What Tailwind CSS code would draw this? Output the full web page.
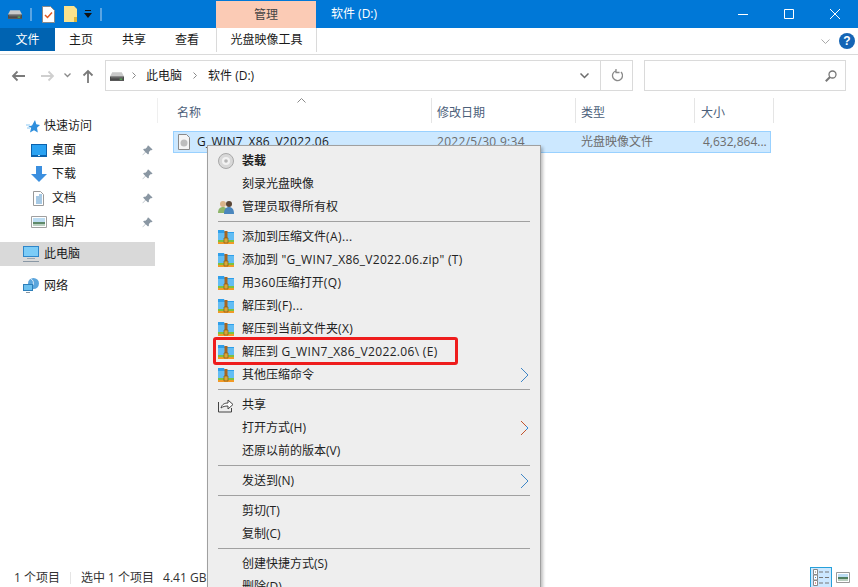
<!DOCTYPE html>
<html>
  <head>
    <meta charset="utf-8" />
    <title>软件 (D:)</title>
    <script src="https://cdn.jsdelivr.net/npm/@tailwindcss/browser@4"></script>
  </head>
  <body class="relative w-[858px] h-[587px] overflow-hidden flex flex-col bg-white text-[12px] text-[#1a1a1a] font-['Open_Sans','Noto_Sans_CJK_SC',sans-serif]">
    <!-- shared icons -->
    <svg class="hidden">
      <symbol id="zip" viewBox="0 0 16 16">
        <path d="M0 1h6l1 2h9v9H0z" fill="#2f9fea" />
        <path d="M0 4h16v7H0z" fill="#62bdf3" />
        <path d="M0 11h16v2H0z" fill="#7cc23f" />
        <path d="M0 13h16v2H0z" fill="#f29a26" />
        <path d="M6.500 2h3v9h-3z" fill="#a8651f" />
        <path d="M6 9h4v5H6z" fill="#d9a638" stroke="#8a5a14" stroke-width=".7" />
      </symbol>
      <symbol id="drive" viewBox="0 0 16 10">
        <path d="M2.500 0h11L16 5v5H0V5z" fill="#c9c9c9" />
        <path d="M0 5h16v5H0z" fill="#4a4a4a" />
        <path d="M1 6h14v1H1z" fill="#7a7a7a" />
        <path d="M11 7.500h3v1h-3z" fill="#5fdc5f" />
      </symbol>
      <symbol id="pin" viewBox="0 0 12 12">
        <path d="M7 .5l4.500 4.500-1 .8-.8-.3-2.200 2.200.1 1.600-1 1L4 7.900.8 11.200.5 10.900 3.600 7.500 1.200 5 2.200 4l1.600.1L6 1.900l-.3-.7z" fill="#8a97a3" />
      </symbol>
      <symbol id="chev" viewBox="0 0 9 16">
        <path d="M1 1l7 7-7 7" fill="none" stroke="currentColor" stroke-width="1" />
      </symbol>
    </svg>

    <!-- title bar -->
    <header class="h-[28px] shrink-0 bg-[#0078d7] flex items-start text-white">
      <div class="w-[216px] h-full flex items-center pl-[8px]">
        <svg class="w-[14px] h-[9px] mt-[1px]"><use href="#drive" /></svg>
        <div class="w-[2px] h-[13px] ml-[8px] bg-[#5aa5e3]"></div>
        <svg class="w-[13px] h-[17px] ml-[10px]" viewBox="0 0 13 17">
          <path d="M.5.500h8l4 4v12H.500z" fill="#fff" stroke="#8a8a8a" />
          <path d="M3 9l2.500 2.500L10 6.500" fill="none" stroke="#e2571e" stroke-width="1.500" />
        </svg>
        <svg class="w-[13px] h-[16px] ml-[9px]" viewBox="0 0 13 16">
          <path d="M0 0h10l3 3v13H0z" fill="#fbe28c" />
          <path d="M10 11h3v5h-3z" fill="#e0b63a" />
        </svg>
        <svg class="w-[8px] h-[8px] ml-[7px]" viewBox="0 0 8 8">
          <path d="M1 0h6v1H1zM0 3h8L4 8z" fill="#111" />
        </svg>
        <div class="w-[2px] h-[13px] ml-[8px] bg-[#5aa5e3]"></div>
      </div>
      <div class="w-[100px] h-[27px] mt-[1px] bg-[#fbcbb5] flex items-center justify-center text-[#444]">管理</div>
      <div class="ml-[15px] h-[28px] flex items-center">软件 (D:)</div>
      <div class="ml-auto flex h-full items-center">
        <div class="w-[46px] flex justify-center">
          <svg class="w-[10px] h-[10px]" viewBox="0 0 10 10"><path d="M0 5.500h10" stroke="#fff" /></svg>
        </div>
        <div class="w-[46px] flex justify-center">
          <svg class="w-[10px] h-[10px]" viewBox="0 0 10 10"><path d="M.5.500h9v9h-9z" fill="none" stroke="#fff" /></svg>
        </div>
        <div class="w-[46px] flex justify-center">
          <svg class="w-[10px] h-[10px]" viewBox="0 0 10 10"><path d="M0 0l10 10M10 0L0 10" stroke="#fff" /></svg>
        </div>
      </div>
    </header>

    <!-- ribbon tabs -->
    <nav class="h-[27px] shrink-0 border-b border-[#dadada] flex items-start">
      <div class="w-[55px] h-[23px] bg-[#0063b1] text-white flex items-center justify-center">文件</div>
      <div class="ml-[14px] h-[24px] flex items-center">主页</div>
      <div class="ml-[29px] h-[24px] flex items-center">共享</div>
      <div class="ml-[29px] h-[24px] flex items-center">查看</div>
      <div class="ml-[17px] w-[101px] h-[24px] border-x border-[#dadada] flex items-center justify-center">光盘映像工具</div>
      <div class="ml-auto h-[26px] flex items-center pr-[3px]">
        <svg class="w-[9px] h-[5px]" viewBox="0 0 9 5"><path d="M.500.500l4 4 4-4" fill="none" stroke="#a9a9a9" /></svg>
        <div class="ml-[9px] w-[16px] h-[16px] rounded-full bg-[#1565b5] text-white font-bold text-[12px] leading-[16px] text-center font-['Liberation_Sans',sans-serif]">?</div>
      </div>
    </nav>

    <!-- address bar -->
    <div class="h-[36px] shrink-0 flex items-end">
      <div class="w-[105px] h-[31px] flex items-center">
        <svg class="ml-[11px] w-[14px] h-[12px]" viewBox="0 0 14 12"><path d="M14 6H2M6.500 1.500L2 6l4.500 4.500" fill="none" stroke="#7a7a7a" stroke-width="1.800" /></svg>
        <svg class="ml-[16px] w-[14px] h-[12px]" viewBox="0 0 14 12"><path d="M0 6h12M7.500 1.500L12 6l-4.500 4.500" fill="none" stroke="#cfcfcf" stroke-width="1.800" /></svg>
        <svg class="ml-[9px] w-[7px] h-[5px]" viewBox="0 0 7 5"><path d="M.500.500L3.500 3.500 6.500.500" fill="none" stroke="#8a8a8a" stroke-width="1.300" /></svg>
        <svg class="ml-[11px] w-[12px] h-[14px]" viewBox="0 0 12 14"><path d="M6 14V2M1.500 6.500L6 2l4.500 4.500" fill="none" stroke="#7a7a7a" stroke-width="1.800" /></svg>
      </div>
      <div class="w-[528px] h-[31px] border border-[#dadada] flex items-center">
        <svg class="ml-[4px] w-[14px] h-[9px] mt-[2px]"><use href="#drive" /></svg>
        <svg class="ml-[8px] w-[4px] h-[7px]" viewBox="0 0 4 7"><path d="M.500.500l3 3-3 3" fill="none" stroke="#8a8a8a" /></svg>
        <span class="ml-[10px]">此电脑</span>
        <svg class="ml-[11px] w-[4px] h-[7px]" viewBox="0 0 4 7"><path d="M.500.500l3 3-3 3" fill="none" stroke="#8a8a8a" /></svg>
        <span class="ml-[11px]">软件 (D:)</span>
        <svg class="ml-auto mr-[11px] w-[9px] h-[6px]" viewBox="0 0 9 6"><path d="M.500.500l4 4 4-4" fill="none" stroke="#6d6d6d" stroke-width="1.500" /></svg>
        <div class="w-[32px] h-full border-l border-[#dadada] flex items-center justify-center">
          <svg class="w-[12px] h-[13px]" viewBox="0 0 12 13"><path d="M4.500 2A5 5 0 1 0 10 3M5 0v3.500h3.500" fill="none" stroke="#8a8a8a" stroke-width="1.300" /></svg>
        </div>
      </div>
      <div class="ml-[11px] w-[202px] h-[31px] border border-[#dadada] flex items-center justify-end pr-[8px]">
        <svg class="w-[12px] h-[12px]" viewBox="0 0 12 12"><circle cx="7.500" cy="4.500" r="3.500" fill="none" stroke="#777" stroke-width="1.300" /><path d="M5 7L.800 11.200" stroke="#777" stroke-width="2" /></svg>
      </div>
    </div>

    <main class="flex-1 min-h-0 flex">
      <!-- nav pane -->
      <aside class="w-[157px] shrink-0 pt-[23px]">
        <div class="h-6 flex items-center pl-[26px]">
          <svg class="w-[14px] h-[13px]" viewBox="0 0 14 13"><path d="M9 0l1.300 4.300L14 5l-3 2.800.8 4.700L8 10.200 4 12.500l1.200-4.700-3-1.300 3.800-1z" fill="#2f8fdd" /><path d="M0 5h4M1 8h3" stroke="#8cc8f2" /></svg>
          <span class="ml-[4px]">快速访问</span>
        </div>
        <div class="h-6 flex items-center pl-[31px] pr-[4px]">
          <svg class="w-[16px] h-[13px]" viewBox="0 0 16 13"><path d="M0 0h16v13H0z" fill="#0b62ad" /><path d="M1 1h14v10H1z" fill="#2aa2f2" /><path d="M1 11h14v1H1z" fill="#0b62ad" /><path d="M7 11.500h2" stroke="#cfe8fa" /></svg>
          <span class="ml-[5px]">桌面</span>
          <svg class="ml-auto w-[11px] h-[11px]"><use href="#pin" /></svg>
        </div>
        <div class="h-6 flex items-center pl-[31px] pr-[4px]">
          <svg class="w-[16px] h-[16px]" viewBox="0 0 16 16"><path d="M5 0h6v8h5l-8 8-8-8h5z" fill="#3b8fdf" /></svg>
          <span class="ml-[5px]">下载</span>
          <svg class="ml-auto w-[11px] h-[11px]"><use href="#pin" /></svg>
        </div>
        <div class="h-6 flex items-center pl-[31px] pr-[4px]">
          <svg class="w-[16px] h-[15px]" viewBox="0 0 16 15"><path d="M2.500.500h7l3 3v11h-10z" fill="#fff" stroke="#9a9a9a" /><path d="M8 4h3M5 6h6M5 8h6M5 10h6M5 12h6" stroke="#4f93c9" /></svg>
          <span class="ml-[5px]">文档</span>
          <svg class="ml-auto w-[11px] h-[11px]"><use href="#pin" /></svg>
        </div>
        <div class="h-6 flex items-center pl-[31px] pr-[4px]">
          <svg class="w-[16px] h-[12px]" viewBox="0 0 16 12"><path d="M.500.500h15v11H.500z" fill="#fff" stroke="#a0a0a0" /><path d="M2 2h12v4H2z" fill="#bcdcf2" /><path d="M2 6h12v2H2z" fill="#5f8a6a" /><path d="M2 8h12v2H2z" fill="#b9cfc0" /></svg>
          <span class="ml-[5px]">图片</span>
          <svg class="ml-auto w-[11px] h-[11px]"><use href="#pin" /></svg>
        </div>
        <div class="mt-[8px] mr-[2px] h-6 bg-[#d9d9d9] flex items-center pl-[23px]">
          <svg class="w-[16px] h-[16px]" viewBox="0 0 16 16"><path d="M0 0h16v11H0z" fill="#2e86c9" /><path d="M1 1h14v9H1z" fill="#7cccf7" /><path d="M4 12h8v1H4z" fill="#9aa7b2" /><path d="M0 15h16v1H0z" fill="#8a98a5" /></svg>
          <span class="ml-[5px]">此电脑</span>
        </div>
        <div class="mt-[8px] h-6 flex items-center pl-[23px]">
          <svg class="w-[16px] h-[16px]" viewBox="0 0 16 16"><circle cx="10.500" cy="5.500" r="5.500" fill="#5ba5dc" /><path d="M8 1c2 1 3 3 2 6" fill="none" stroke="#dcecf7" /><path d="M0 6h10v7H0z" fill="#2e7fb9" /><path d="M1 7h8v5H1z" fill="#6cc0ef" /><path d="M3 14h4v1H3z" fill="#8a98a5" /></svg>
          <span class="ml-[5px]">网络</span>
        </div>
      </aside>

      <!-- file list -->
      <section class="flex-1 min-w-0 pt-[7px] relative">
        <div class="h-[25px] flex text-[#4c607a]">
          <div class="relative w-[274px] pl-[19px] pt-[6px] border-l border-[#efefef]">
            名称
            <svg class="absolute left-[139px] top-0 w-[9px] h-[5px]" viewBox="0 0 9 5"><path d="M.500 4.500l4-4 4 4" fill="none" stroke="#8a8a8a" /></svg>
          </div>
          <div class="w-[144px] pl-[5px] pt-[6px] border-l border-[#e5e5e5]">修改日期</div>
          <div class="w-[119px] pl-[5px] pt-[6px] border-l border-[#e5e5e5]">类型</div>
          <div class="w-[80px] pl-[6px] pt-[6px] border-x border-[#e5e5e5]">大小</div>
        </div>
        <div class="mt-[8px] ml-[16px] w-[598px] h-[22px] bg-[#cce8ff] border border-[#99d1ff] flex items-center whitespace-nowrap overflow-hidden">
          <div class="w-[257px] flex items-center pl-[4px]">
            <svg class="w-[12px] h-[16px]" viewBox="0 0 12 16"><path d="M.500.500h8l3 3v12h-11z" fill="#f5f5f5" stroke="#8a8a8a" /><circle cx="6" cy="9" r="3.500" fill="#bdbdbd" /></svg>
            <span class="ml-[7px] tracking-[0.27px]">G_WIN7_X86_V2022.06</span>
          </div>
          <div class="w-[144px] pl-[6px] text-[#6d6d6d] tracking-[0.3px]">2022/5/30 9:34</div>
          <div class="w-[122px] pl-[6px] shrink-0 text-[#6d6d6d]">光盘映像文件</div>
          <div class="pl-[6px] text-[#6d6d6d]">4,632,864...</div>
        </div>
      </section>
    </main>

    <!-- status bar -->
    <footer class="h-[21px] shrink-0 flex items-center pl-[14px] pt-[2px] text-[#333]">
      <span>1 个项目</span>
      <div class="ml-[10px] w-px h-[12px] bg-[#e5e5e5]"></div>
      <span class="ml-[10px]">选中 1 个项目</span>
      <span class="ml-[9px]">4.41 GB</span>
      <div class="ml-auto mr-[8px] flex items-center">
        <div class="w-[22px] h-[21px] bg-[#cce8ff] border border-[#26a0da] flex flex-col items-center justify-center gap-[1px]">
          <svg class="w-[16px] h-[17px]" viewBox="0 0 16 17"><path d="M.500.500h4v5h-4zM.500 6h4v5h-4zM.500 11.500h4v5h-4z" fill="#fff" stroke="#888" /><path d="M6 3h4M12 3h4M6 8.500h4M12 8.500h4M6 14h4M12 14h4" stroke="#777" /><path d="M2 2.500h1v1H2z" fill="#777" /><path d="M2 8h1v1H2z" fill="#3d8fd1" /><path d="M2 13.500h1v1H2z" fill="#c33" /></svg>
        </div>
        <svg class="ml-[4px] w-[14px] h-[11px]" viewBox="0 0 14 11"><path d="M.500.500h13v10H.500z" fill="#fff" stroke="#999" /><path d="M2 2h10v3H2z" fill="#bcdcf2" /><path d="M2 5h10v2H2z" fill="#4f7f5f" /><path d="M2 7h10v2H2z" fill="#b9cfc0" /></svg>
      </div>
    </footer>

    <!-- context menu -->
    <div class="absolute left-[207px] top-[145px] bottom-[-40px] w-[334px] bg-[#eeeeee] border border-[#a0a0a0] shadow-[2px_2px_3px_rgba(0,0,0,0.25)] pt-[3px] text-[#222] overflow-hidden">
      <div class="h-[23px] flex items-center pl-[10px]">
        <svg class="w-[16px] h-[16px]" viewBox="0 0 16 16"><circle cx="8" cy="8" r="7.500" fill="#d8d8d8" stroke="#a8a8a8" /><circle cx="8" cy="8" r="4" fill="#f2f2f2" /><circle cx="8" cy="8" r="1.800" fill="#b5b5b5" /></svg>
        <span class="ml-[8px] font-bold">装载</span>
      </div>
      <div class="h-[23px] flex items-center pl-[34px]">刻录光盘映像</div>
      <div class="h-[23px] flex items-center pl-[10px]">
        <svg class="w-[16px] h-[16px]" viewBox="0 0 16 16"><circle cx="5" cy="5" r="3" fill="#d9b48a" /><path d="M0 14c0-4 2-6 5-6s4 2 4 6z" fill="#8db56a" /><circle cx="11" cy="5" r="3" fill="#5a4636" /><path d="M6 15c0-5 2-7 5-7s5 2 5 7z" fill="#4a86bd" /></svg>
        <span class="ml-[8px]">管理员取得所有权</span>
      </div>
      <div class="my-[3px] mx-[10px] h-px bg-[#a0a0a0]"></div>
      <div class="h-[23px] flex items-center pl-[10px]"><svg class="w-[16px] h-[16px]"><use href="#zip" /></svg><span class="ml-[8px]">添加到压缩文件<span class="tracking-[0.4px]">(A)...</span></span></div>
      <div class="h-[23px] flex items-center pl-[10px]"><svg class="w-[16px] h-[16px]"><use href="#zip" /></svg><span class="ml-[8px]">添加到<span class="tracking-[0.3px]"> "G_WIN7_X86_V2022.06.zip" (T)</span></span></div>
      <div class="h-[23px] flex items-center pl-[10px]"><svg class="w-[16px] h-[16px]"><use href="#zip" /></svg><span class="ml-[8px]"><span>用</span><span class="tracking-[0.4px]">360</span>压缩打开<span class="tracking-[0.4px]">(Q)</span></span></div>
      <div class="h-[23px] flex items-center pl-[10px]"><svg class="w-[16px] h-[16px]"><use href="#zip" /></svg><span class="ml-[8px]">解压到<span class="tracking-[0.4px]">(F)...</span></span></div>
      <div class="h-[23px] flex items-center pl-[10px]"><svg class="w-[16px] h-[16px]"><use href="#zip" /></svg><span class="ml-[8px]">解压到当前文件夹<span class="tracking-[0.4px]">(X)</span></span></div>
      <div class="h-[23px] flex items-center pl-[10px]"><svg class="w-[16px] h-[16px]"><use href="#zip" /></svg><span class="ml-[8px]">解压到<span class="tracking-[0.33px]"> G_WIN7_X86_V2022.06\ (E)</span></span></div>
      <div class="h-[23px] flex items-center pl-[10px] pr-[11px]"><svg class="w-[16px] h-[16px]"><use href="#zip" /></svg><span class="ml-[8px]">其他压缩命令</span><svg class="ml-auto w-[9px] h-[16px] text-[#3f86c6]"><use href="#chev" /></svg></div>
      <div class="my-[3px] mx-[10px] h-px bg-[#a0a0a0]"></div>
      <div class="h-[23px] flex items-center pl-[10px]">
        <svg class="w-[16px] h-[16px]" viewBox="0 0 16 16"><path d="M.500 5v10h13v-4" fill="none" stroke="#444" /><path d="M3 11c1-4 4-5 7-5V3l5 4.500L10 12V9c-3 0-5 .5-7 2z" fill="#fff" stroke="#444" /></svg>
        <span class="ml-[8px]">共享</span>
      </div>
      <div class="h-[23px] flex items-center pl-[34px] pr-[11px]">打开方式(H)<svg class="ml-auto w-[9px] h-[16px]" viewBox="0 0 9 16"><path d="M1 1l5 5M6 10l-5 5" fill="none" stroke="#c2532c" /><path d="M6 6l2 2-2 2" fill="none" stroke="#2f86d8" /></svg></div>
      <div class="h-[23px] flex items-center pl-[34px]">还原以前的版本(V)</div>
      <div class="my-[3px] mx-[10px] h-px bg-[#a0a0a0]"></div>
      <div class="h-[23px] flex items-center pl-[34px] pr-[11px]">发送到(N)<svg class="ml-auto w-[9px] h-[16px] text-[#3f86c6]"><use href="#chev" /></svg></div>
      <div class="my-[3px] mx-[10px] h-px bg-[#a0a0a0]"></div>
      <div class="h-[23px] flex items-center pl-[34px]">剪切(T)</div>
      <div class="h-[23px] flex items-center pl-[34px]">复制(C)</div>
      <div class="my-[3px] mx-[10px] h-px bg-[#a0a0a0]"></div>
      <div class="h-[23px] flex items-center pl-[34px]">创建快捷方式(S)</div>
      <div class="h-[23px] flex items-center pl-[34px]">删除(D)</div>
    </div>

    <!-- red highlight over the menu entry -->
    <div class="absolute left-[213px] top-[337px] w-[245px] h-[28px] border-[3px] border-[#ee1c1c] rounded-[3px]"></div>
  </body>
</html>
